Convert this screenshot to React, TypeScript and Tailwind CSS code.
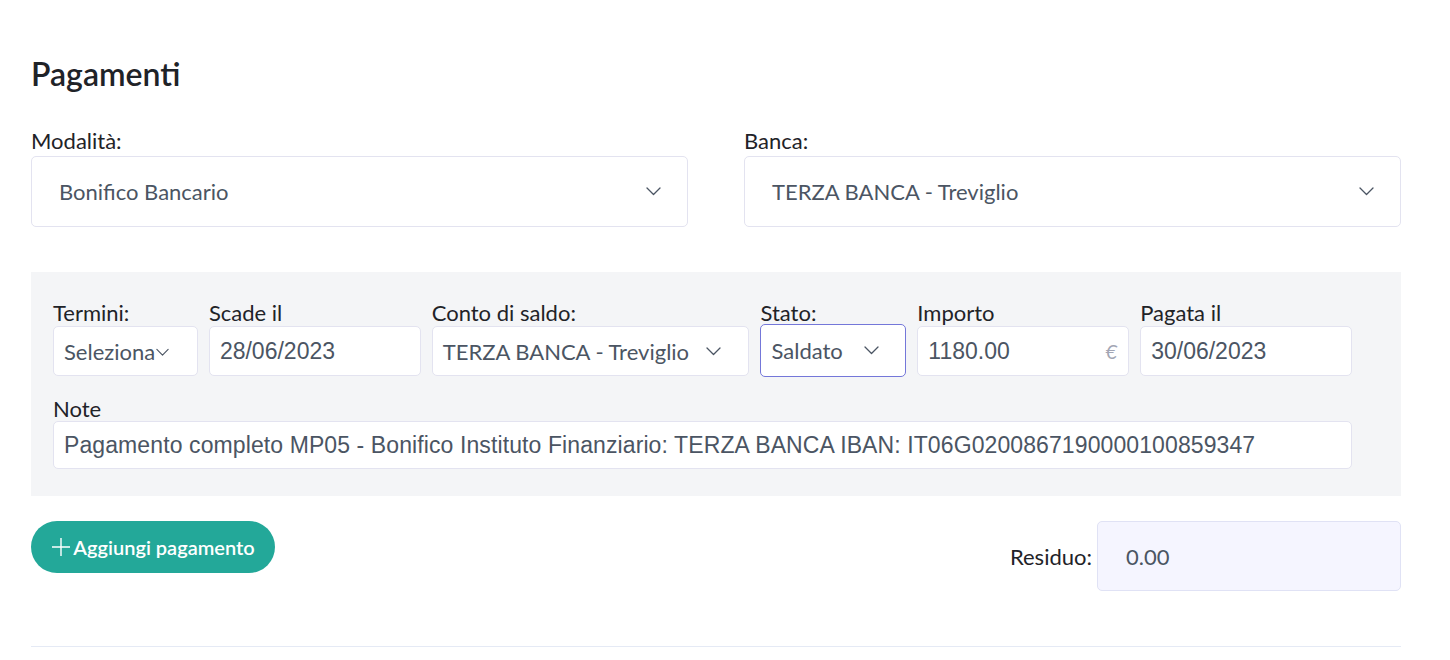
import React from "react";

const ui = { fontFamily: "Lato, 'Noto Sans', sans-serif" };
const arial = { fontFamily: "'Liberation Sans', Arial, sans-serif" };

const Chevron = ({ className = "" }: { className?: string }) => (
  <svg width="15" height="9" viewBox="0 0 15 9" fill="none" className={className}>
    <path d="M1 1l6.5 6.5L14 1" stroke="#4b5563" strokeWidth="1.3" strokeLinecap="round" strokeLinejoin="round" />
  </svg>
);

const Field = ({ label, width, children }: { label: string; width: string; children: React.ReactNode }) => (
  <div className={`flex flex-col ${width}`}>
    <label className="text-[22px] leading-[26px] text-[#1f2328]">{label}</label>
    {children}
  </div>
);

const App: React.FC = () => {
  return (
    <div className="min-h-screen bg-white px-[31px] pt-[52px]" style={ui}>
      <div className="w-[1370px]">
        <h2 className="text-[32px] font-semibold leading-[44px] text-[#1f2328]">Pagamenti</h2>

        <div className="mt-[29px] grid grid-cols-2 gap-[56px]">
          <div className="flex flex-col">
            <label className="text-[22px] leading-[31px] text-[#1f2328]">Modalità:</label>
            <div className="flex h-[71px] items-center justify-between rounded-[5px] border border-[#e3e3f0] bg-white pl-[27px] pr-[26px]">
              <span className="text-[22px] text-[#4b5563]">Bonifico Bancario</span>
              <Chevron />
            </div>
          </div>
          <div className="flex flex-col">
            <label className="text-[22px] leading-[31px] text-[#1f2328]">Banca:</label>
            <div className="flex h-[71px] items-center justify-between rounded-[5px] border border-[#e3e3f0] bg-white pl-[27px] pr-[26px]">
              <span className="text-[22px] text-[#4b5563]">TERZA BANCA - Treviglio</span>
              <Chevron />
            </div>
          </div>
        </div>

        <div className="mt-[45px] bg-[#f4f5f7] pb-[27px] pl-[22px] pr-[49px] pt-[28px]">
          <div className="flex gap-[11px]">
            <Field label="Termini:" width="w-[145px]">
              <div className="flex h-[50px] items-center rounded-[5px] border border-[#e3e3f0] bg-white pl-[10px]">
                <span className="text-[22px] text-[#4b5563]">Seleziona</span>
                <Chevron className="ml-[1px] mt-[3px] w-[13px]" />
              </div>
            </Field>
            <Field label="Scade il" width="w-[212px]">
              <div className="flex h-[50px] items-center rounded-[5px] border border-[#e3e3f0] bg-white px-[10px]">
                <span className="text-[23px] text-[#4b5563]" style={arial}>28/06/2023</span>
              </div>
            </Field>
            <Field label="Conto di saldo:" width="w-[318px]">
              <div className="flex h-[50px] items-center justify-between rounded-[5px] border border-[#e3e3f0] bg-white pl-[10px] pr-[27px]">
                <span className="text-[22px] text-[#4b5563]">TERZA BANCA - Treviglio</span>
                <Chevron />
              </div>
            </Field>
            <Field label="Stato:" width="w-[146px]">
              <div className="-mt-[2px] flex h-[53px] items-center justify-between rounded-[5px] border border-[#7477d9] bg-white pl-[10px] pr-[26px]">
                <span className="text-[22px] text-[#4b5563]">Saldato</span>
                <Chevron />
              </div>
            </Field>
            <Field label="Importo" width="w-[212px]">
              <div className="flex h-[50px] items-center justify-between rounded-[5px] border border-[#e3e3f0] bg-white pl-[10px] pr-[11px]">
                <span className="text-[23px] text-[#4b5563]" style={arial}>1180.00</span>
                <span className="text-[20px] italic text-[#a3a6b4]">€</span>
              </div>
            </Field>
            <Field label="Pagata il" width="w-[212px]">
              <div className="flex h-[50px] items-center rounded-[5px] border border-[#e3e3f0] bg-white px-[10px]">
                <span className="text-[23px] text-[#4b5563]" style={arial}>30/06/2023</span>
              </div>
            </Field>
          </div>

          <div className="mt-[20px] flex flex-col">
            <label className="text-[22px] leading-[24px] text-[#1f2328]">Note</label>
            <div className="flex h-[48px] items-center rounded-[5px] border border-[#e3e3f0] bg-white px-[10px]">
              <span className="text-[23px] tracking-[0.1px] text-[#4b5563]" style={arial}>
                Pagamento completo MP05 - Bonifico Instituto Finanziario: TERZA BANCA IBAN: IT06G0200867190000100859347
              </span>
            </div>
          </div>
        </div>

        <div className="mt-[25px] flex items-start justify-between">
          <button className="flex h-[52px] w-[244px] items-center justify-center gap-[2px] rounded-full bg-[#23a899] text-[20px] font-semibold text-white">
            <svg width="20" height="20" viewBox="0 0 20 20" fill="none">
              <path d="M10 1v18M1 10h18" stroke="white" strokeWidth="1.4" />
            </svg>
            Aggiungi pagamento
          </button>
          <div className="flex items-center gap-[5px]">
            <span className="text-[22px] text-[#1f2328]">Residuo:</span>
            <div className="flex h-[70px] w-[304px] items-center rounded-[5px] border border-[#e0e2f5] bg-[#f5f5ff] pl-[28px]">
              <span className="text-[22px] text-[#4b5563]">0.00</span>
            </div>
          </div>
        </div>

        <div className="mt-[55px] border-t border-[#e5eaf5]" />
      </div>
    </div>
  );
};

export default App;
